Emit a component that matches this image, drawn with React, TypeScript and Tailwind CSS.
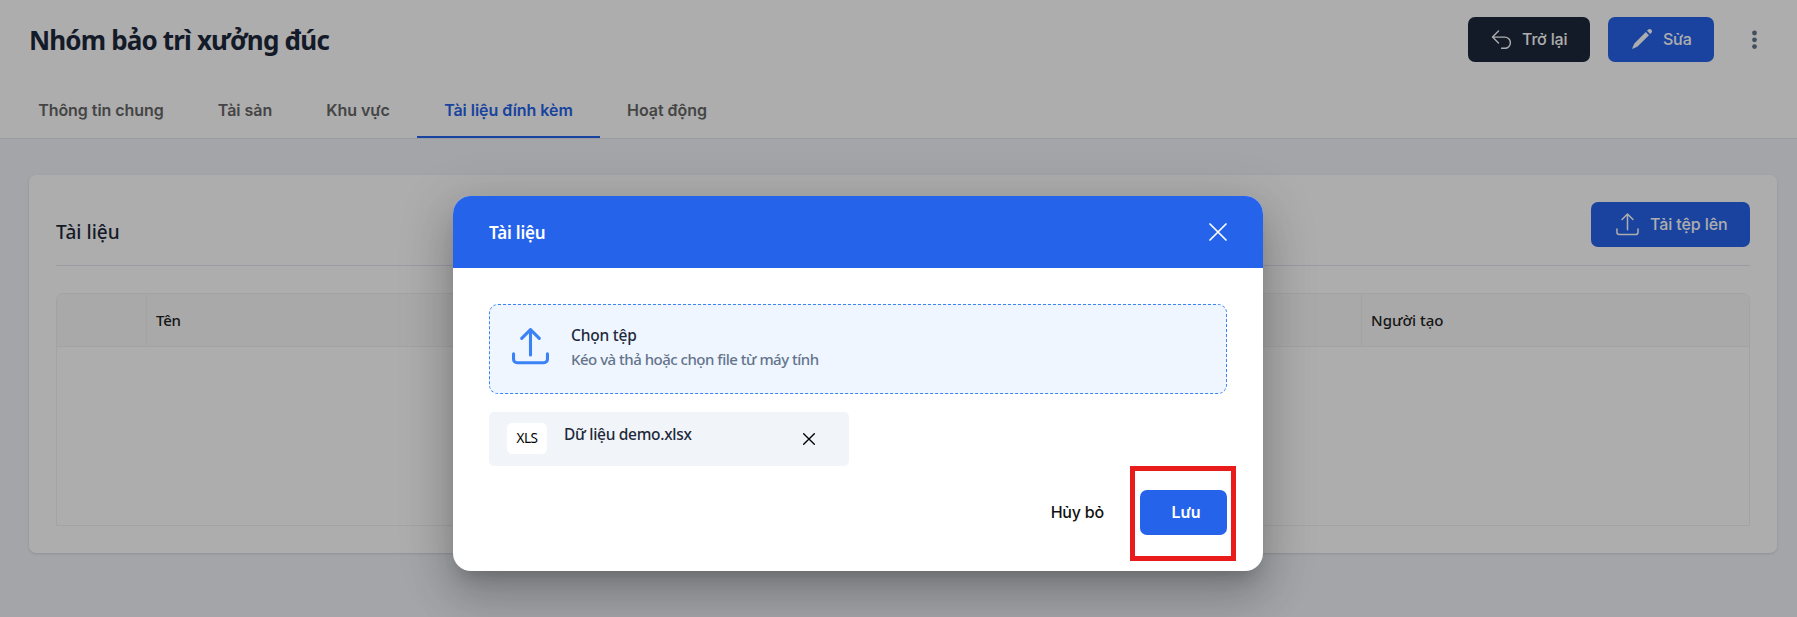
import type { ReactNode } from 'react';

const tabs = [
  { label: 'Thông tin chung', width: 'w-[180px]' },
  { label: 'Tài sản', width: 'w-[108px]' },
  { label: 'Khu vực', width: 'w-[118px]' },
  { label: 'Tài liệu đính kèm', width: 'w-[183px]', active: true },
  { label: 'Hoạt động', width: 'w-[134px]' },
];

function UploadIcon({ className, stroke }: { className: string; stroke: number }) {
  return (
    <svg viewBox="0 0 24 24" fill="none" stroke="currentColor" strokeWidth={stroke} strokeLinecap="round" strokeLinejoin="round" className={className}>
      <path d="M12 17.5V1M6.3 6.7 12 1l5.7 5.7M1 16.8v3.4A2.3 2.3 0 0 0 3.3 22.5h17.4a2.3 2.3 0 0 0 2.3-2.3v-3.4" />
    </svg>
  );
}

function CloseIcon({ className, stroke }: { className: string; stroke: number }) {
  return (
    <svg viewBox="0 0 18 18" fill="none" stroke="currentColor" strokeWidth={stroke} strokeLinecap="round" className={className}>
      <path d="m1 1 16 16M17 1 1 17" />
    </svg>
  );
}

function Button({ className, children }: { className: string; children: ReactNode }) {
  return (
    <button className={`flex h-[45px] items-center rounded-[7px] pb-[2px] font-['Inter',sans-serif] text-[16px] whitespace-nowrap text-white ${className}`}>
      {children}
    </button>
  );
}

function Header() {
  return (
    <header className="h-[139px] border-b border-[#e2e8f0] bg-white">
      <div className="flex h-[82px] items-start justify-between pt-[17px] pl-[29px]">
        <h1 className="text-[26px] leading-[46px] font-bold tracking-[-0.84px] text-[#1e293b]">Nhóm bảo trì xưởng đúc</h1>
        <div className="flex items-center">
          <Button className="w-[122px] bg-[#1e293b] pl-[23px] font-medium">
            <svg viewBox="0 0 20 20" fill="none" stroke="currentColor" strokeWidth="1.4" strokeLinecap="round" strokeLinejoin="round" className="mt-0.5 mr-[11px] size-5 shrink-0">
              <path d="M7.5 1.1 1.5 7.1l6 6M1.5 7.1h12.3a5.6 5.6 0 0 1 0 11.2h-3.2" />
            </svg>
            <span className="tracking-[-0.15px]">Trở lại</span>
          </Button>
          <Button className="ml-[18px] w-[106px] bg-[#2563eb] pl-6 font-medium">
            <svg viewBox="0 0 20 20" fill="currentColor" className="mr-[11px] size-5 shrink-0">
              <path d="M13.8 3 17 6.2 5.8 17.3a3 3 0 0 1-1.2.8L.8 19.8a.45.45 0 0 1-.6-.6L1.9 15.4a3 3 0 0 1 .7-1.2zM15 1.8l1.1-1.1a2.2 2.2 0 0 1 3.1 0l.1.1a2.2 2.2 0 0 1 0 3.1L18.200 5z" />
            </svg>
            <span className="tracking-[-0.3px]">Sửa</span>
          </Button>
          <svg viewBox="0 0 20 20" fill="#64748b" className="mr-[33px] ml-[30px] size-5">
            <circle cx="10.5" cy="3" r="2.4" />
            <circle cx="10.5" cy="9.8" r="2.4" />
            <circle cx="10.5" cy="16.6" r="2.4" />
          </svg>
        </div>
      </div>
      <nav className="flex h-[56px] pl-[11px] font-['Inter',sans-serif] text-[16px] font-semibold">
        {tabs.map((tab) => (
          <div
            key={tab.label}
            className={`flex shrink-0 justify-center border-b-2 pt-4 leading-6 tracking-[-0.04px] whitespace-nowrap ${tab.width} ${tab.active ? 'border-[#2563eb] text-[#2563eb]' : 'border-transparent text-[#666]'}`}
          >
            {tab.label}
          </div>
        ))}
      </nav>
    </header>
  );
}

function Documents() {
  return (
    <section className="mt-9 mr-5 ml-[29px] h-[378px] rounded-[7px] bg-white px-[27px] pt-[27px] shadow-sm">
      <div className="flex h-[64px] items-start justify-between border-b border-[#e2e8f0]">
        <h2 className="pt-[14px] text-[19px] leading-8 font-medium tracking-[0.05px] text-[#1e293b]">Tài liệu</h2>
        <Button className="w-[159px] bg-[#2563eb] pl-[25px] font-medium">
          <UploadIcon className="mt-0.5 mr-[11px] size-[23px] shrink-0" stroke={1.6} />
          <span className="tracking-[-0.1px]">Tải tệp lên</span>
        </Button>
      </div>
      <div className="mt-[27px] h-[233px] overflow-hidden rounded-t-[7px] border border-[#f0f0f0] text-[15px] font-medium text-[#222]">
        <div className="flex h-[53px] items-center border-b border-[#f0f0f0] bg-[#fafafa]">
          <div className="h-full w-[90px] border-r border-[#f0f0f0]" />
          <div className="flex h-full w-[1215px] items-center border-r border-[#f0f0f0] pl-[9px] tracking-[-0.2px]">Tên</div>
          <div className="pl-[9px] tracking-[0px]">Người tạo</div>
        </div>
      </div>
    </section>
  );
}

function UploadDialog() {
  return (
    <div className="absolute top-[196px] left-[453px] h-[375px] w-[810px] rounded-[18px] bg-white shadow-[0_12px_17px_-8px_rgba(0,0,0,0.2),0_27px_43px_3px_rgba(0,0,0,0.14),0_10px_52px_9px_rgba(0,0,0,0.12)]">
      <div className="flex h-[72px] items-center justify-between rounded-t-[18px] bg-[#2563eb] px-9 text-white">
        <span className="pt-px text-[17px] font-semibold tracking-[-0.2px]">Tài liệu</span>
        <CloseIcon className="size-[18px]" stroke={1.7} />
      </div>
      <div className="px-9 pt-9">
        <div className="flex h-[90px] items-center rounded-[9px] border border-dashed border-[#3b82f6] bg-[#eff6ff] pb-[5px] pl-[22px]">
          <UploadIcon className="size-[37px] text-[#3b82f6]" stroke={2} />
          <div className="ml-[22px] pt-px">
            <div className="text-[15.5px] leading-6 font-medium tracking-[-0.2px] text-[#1e293b]">Chọn tệp</div>
            <div className="text-[15px] leading-6 font-medium tracking-[-0.5px] text-[#64748b]">Kéo và thả hoặc chọn file từ máy tính</div>
          </div>
        </div>
        <div className="mt-[18px] flex h-[54px] w-[360px] items-center rounded-[5px] bg-[#f1f5f9] pl-[18px]">
          <div className="mb-px flex h-[31px] w-10 items-center justify-center rounded-[5px] bg-white text-[13.5px] tracking-[-0.5px] text-black">XLS</div>
          <div className="ml-[17px] pb-2 text-[15.5px] font-medium tracking-[-0.3px] text-[#1e293b]">Dữ liệu demo.xlsx</div>
          <CloseIcon className="mr-[34px] ml-auto size-[12px] text-black" stroke={2} />
        </div>
        <div className="mt-6 flex items-center justify-end font-['Inter',sans-serif]">
          <span className="mr-9 pb-[2px] text-[16px] font-medium tracking-[-0.2px] text-[#111]">Hủy bỏ</span>
          <Button className="w-[87px] justify-center bg-[#2563eb] pl-[5px] font-semibold">Lưu</Button>
        </div>
      </div>
      <div className="absolute top-[270px] left-[677px] h-[95px] w-[106px] border-[5px] border-[#e91c1c]" />
    </div>
  );
}

export default function App() {
  return (
    <div className="relative h-[617px] overflow-hidden bg-[#f1f3f9] font-['Noto_Sans',sans-serif]">
      <Header />
      <Documents />
      <div className="absolute inset-0 bg-black/32" />
      <UploadDialog />
    </div>
  );
}
